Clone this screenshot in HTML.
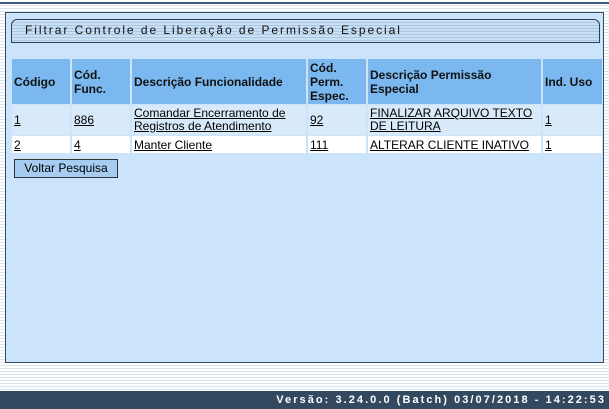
<!DOCTYPE html>
<html><head><meta charset="utf-8"><style>
body{margin:0;width:609px;height:409px;overflow:hidden;position:relative;font-family:"Liberation Sans",Arial,sans-serif;font-size:12px;
background:repeating-linear-gradient(to bottom,#ffffff 0,#ffffff 2px,#d6e4f0 2px,#d6e4f0 3px);}
.top{position:absolute;left:0;top:0;width:609px;height:4px;background:#fff;border-bottom:2px solid #3b5878;box-sizing:border-box}
.panel{position:absolute;left:5px;top:12px;width:599px;height:351px;box-sizing:border-box;background:#cce4fb;border:1px solid #3a4a5a}
.title{position:absolute;left:11px;top:19px;width:589px;height:24px;box-sizing:border-box;border:1px solid #2f3f55;border-radius:6px 6px 0 0;
background:repeating-linear-gradient(to bottom,#c9dff3 0,#c9dff3 2px,#a9c6e2 2px,#a9c6e2 3px);font-size:12px;letter-spacing:1.95px;color:#111;padding:3px 0 0 13px;white-space:nowrap}
table{position:absolute;left:10px;top:58px;width:594px;table-layout:fixed;border-collapse:separate;border-spacing:2px 1px;font-size:12px}
td,th{padding:0 2px;text-align:left;vertical-align:middle;overflow:hidden}
th{background:#7ab8ef;font-weight:bold;height:45px;color:#111}
tr.r1 td{background:#d8e9f9;height:30px;line-height:13px}
tr.r2 td{background:#fff;height:17px}
a{color:#000;text-decoration:underline}
.btn{position:absolute;left:14px;top:159px;width:104px;height:19px;box-sizing:border-box;background:#a6cdf1;border:1px solid #333;font-size:12px;text-align:center;line-height:16px}
.foot{position:absolute;left:0;top:391px;width:609px;height:18px;background:#33495f;color:#fff;font-weight:bold;font-size:11px;letter-spacing:2.05px;text-align:right;line-height:18px;padding-right:3px;box-sizing:border-box;white-space:nowrap}
</style></head><body>
<div class="top"></div>
<div class="panel"></div>
<div class="title">Filtrar Controle de Liberação de Permissão Especial</div>
<table>
<colgroup><col style="width:58px"><col style="width:58px"><col style="width:174px"><col style="width:58px"><col style="width:173px"><col style="width:59px"></colgroup>
<tr><th>Código</th><th>Cód.<br>Func.</th><th>Descrição Funcionalidade</th><th>Cód.<br>Perm.<br>Espec.</th><th>Descrição Permissão<br>Especial</th><th style="white-space:nowrap">Ind. Uso</th></tr>
<tr class="r1"><td><a>1</a></td><td><a>886</a></td><td><a>Comandar Encerramento de Registros de Atendimento</a></td><td><a>92</a></td><td><a>FINALIZAR ARQUIVO TEXTO DE LEITURA</a></td><td><a>1</a></td></tr>
<tr class="r2"><td><a>2</a></td><td><a>4</a></td><td><a>Manter Cliente</a></td><td><a>111</a></td><td><a>ALTERAR CLIENTE INATIVO</a></td><td><a>1</a></td></tr>
</table>
<div class="btn">Voltar Pesquisa</div>
<div class="foot">Versão: 3.24.0.0 (Batch) 03/07/2018 - 14:22:53</div>
</body></html>
